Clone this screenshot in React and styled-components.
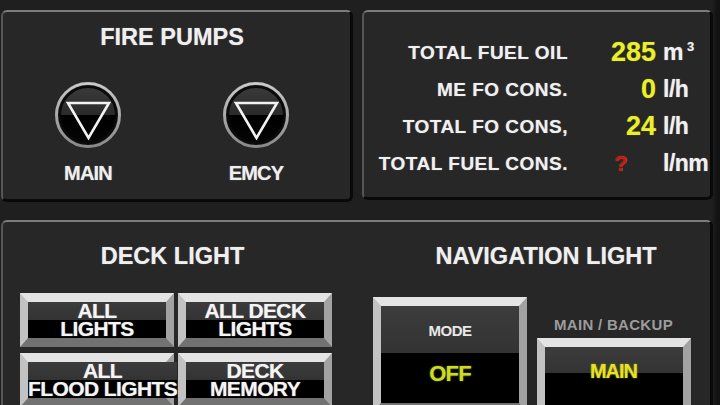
import styled, { createGlobalStyle } from "styled-components";

const GlobalStyle = createGlobalStyle`
  html, body {
    margin: 0;
    padding: 0;
    background: #1e1e1e;
  }
  body {
    width: 720px;
    height: 405px;
    overflow: hidden;
    font-family: "Liberation Sans", Arial, sans-serif;
  }
`;

const fuelRows = [
  { label: "TOTAL FUEL OIL", value: "285", unit: "m", sup: "3" },
  { label: "ME FO CONS.", value: "0", unit: "l/h" },
  { label: "TOTAL FO CONS,", value: "24", unit: "l/h" },
  { label: "TOTAL FUEL CONS.", value: "?", unit: "l/nm", unknown: true },
];

const deckButtons = [
  ["ALL", "LIGHTS"],
  ["ALL DECK", "LIGHTS"],
  ["ALL", "FLOOD LIGHTS"],
  ["DECK", "MEMORY"],
];

const PumpIcon = () => (
  <svg width="66" height="66" viewBox="0 0 66 66">
    <defs>
      <linearGradient id="ring" x1="0" y1="0" x2="0" y2="1">
        <stop offset="0" stopColor="#c8c8c8" />
        <stop offset="1" stopColor="#8a8a8a" />
      </linearGradient>
      <linearGradient id="face" x1="0" y1="0" x2="0" y2="1">
        <stop offset="0" stopColor="#3a3a3a" />
        <stop offset="0.5" stopColor="#2a2a2a" />
        <stop offset="0.5" stopColor="#000" />
        <stop offset="1" stopColor="#050505" />
      </linearGradient>
    </defs>
    <circle cx="33" cy="33" r="31.5" fill="#101010" stroke="url(#ring)" strokeWidth="3" />
    <circle cx="33" cy="33" r="28" fill="url(#face)" stroke="#0a0a0a" strokeWidth="2" />
    <path
      d="M13 21 L54 21 L33.5 56 Z"
      fill="none"
      stroke="#f2f2f2"
      strokeWidth="2.6"
      strokeLinejoin="miter"
    />
  </svg>
);

const App = () => {
  return (
    <Screen>
      <GlobalStyle />
      <TopRow>
        <PumpsPanel>
          <PanelTitle $shift={-9}>FIRE PUMPS</PanelTitle>
          <Pumps>
            {["MAIN", "EMCY"].map((name) => (
              <Pump key={name}>
                <PumpIcon />
                <PumpLabel>{name}</PumpLabel>
              </Pump>
            ))}
          </Pumps>
        </PumpsPanel>

        <FuelPanel>
          {fuelRows.map((row) => (
            <FuelRow key={row.label}>
              <FuelLabel>{row.label}</FuelLabel>
              <FuelValue $unknown={row.unknown}>{row.value}</FuelValue>
              <FuelUnit>
                {row.unit}
                {row.sup && <sup>{row.sup}</sup>}
              </FuelUnit>
            </FuelRow>
          ))}
        </FuelPanel>
      </TopRow>

      <LightsPanel>
        <DeckSection>
          <PanelTitle>DECK LIGHT</PanelTitle>
          <DeckGrid>
            {deckButtons.map(([a, b]) => (
              <BevelButton key={a + b} $h={54}>
                <Face $split={18}>
                  <DeckText>
                    <span>{a}</span>
                    <span>{b}</span>
                  </DeckText>
                </Face>
              </BevelButton>
            ))}
          </DeckGrid>
        </DeckSection>

        <NavSection>
          <PanelTitle $shift={40}>NAVIGATION LIGHT</PanelTitle>
          <NavRow>
            <BevelButton $h={115}>
              <Face $split={47}>
                <ModeLabel>MODE</ModeLabel>
                <ModeValue>OFF</ModeValue>
              </Face>
            </BevelButton>
            <BackupColumn>
              <BackupLabel>MAIN / BACKUP</BackupLabel>
              <BevelButton $h={80}>
                <Face $split={26}>
                  <BackupValue>MAIN</BackupValue>
                </Face>
              </BevelButton>
            </BackupColumn>
          </NavRow>
        </NavSection>
      </LightsPanel>
    </Screen>
  );
};

const Screen = styled.div`
  width: 720px;
  height: 405px;
  box-sizing: border-box;
  padding: 10px 0 0 1px;
  display: flex;
  flex-direction: column;
  gap: 18px;
  overflow: hidden;
  background: linear-gradient(90deg, #1f1f1f 712px, #131313 717px);
`;

const TopRow = styled.div`
  display: flex;
  align-items: flex-start;
  gap: 9px;
`;

const Panel = styled.div`
  box-sizing: border-box;
  flex-shrink: 0;
  background: #272727;
  border-radius: 6px;
  border-style: solid;
  border-width: 2px 3px 3px 2px;
  border-color: #7c7c7c #090909 #090909 #565656;
`;

const PumpsPanel = styled(Panel)`
  width: 352px;
  height: 192px;
  padding-top: 11px;
`;

const PanelTitle = styled.div`
  color: #efefef;
  font-size: 23.5px;
  font-weight: 700;
  line-height: 28px;
  text-align: center;
  white-space: nowrap;
  text-shadow: 0 0 1px rgba(255, 255, 255, 0.5);
  padding-left: ${(p) => (p.$shift > 0 ? p.$shift : 0)}px;
  padding-right: ${(p) => (p.$shift < 0 ? -p.$shift : 0)}px;
`;

const Pumps = styled.div`
  display: flex;
  gap: 68px;
  padding-left: 35px;
  margin-top: 31px;
`;

const Pump = styled.div`
  width: 100px;
  display: flex;
  flex-direction: column;
  align-items: center;
`;

const PumpLabel = styled.div`
  margin-top: 15px;
  color: #efefef;
  font-size: 20px;
  font-weight: 700;
  line-height: 20px;
  letter-spacing: -0.8px;
  text-shadow: 0 0 1px rgba(255, 255, 255, 0.5);
`;

const FuelPanel = styled(Panel)`
  width: 351px;
  height: 190px;
  padding-top: 22px;
  display: grid;
  grid-auto-rows: 37px;
  align-content: start;
`;

const FuelRow = styled.div`
  display: grid;
  grid-template-columns: 204px 81px 1fr;
  column-gap: 7px;
  align-items: center;
`;

const FuelLabel = styled.div`
  text-align: right;
  color: #f0f0f0;
  font-size: 19px;
  font-weight: 700;
  letter-spacing: 0.5px;
  white-space: nowrap;
  text-shadow: 0 0 1px rgba(255, 255, 255, 0.5);
`;

const FuelValue = styled.div`
  text-align: right;
  font-weight: 700;
  font-size: ${(p) => (p.$unknown ? "22px" : "27px")};
  color: ${(p) => (p.$unknown ? "#d41414" : "#eaef2c")};
  padding-right: ${(p) => (p.$unknown ? "28px" : "0")};
  text-shadow: 0 0 1px rgba(230, 240, 40, 0.5);
`;

const FuelUnit = styled.div`
  color: #f0f0f0;
  font-size: 23px;
  font-weight: 700;
  letter-spacing: -0.5px;
  white-space: nowrap;
  text-shadow: 0 0 1px rgba(255, 255, 255, 0.5);

  sup {
    font-size: 13px;
    margin-left: 4px;
    vertical-align: 9px;
    line-height: 0;
  }
`;

const LightsPanel = styled(Panel)`
  width: 712px;
  height: 220px;
  padding-top: 20px;
  display: flex;
`;

const DeckSection = styled.div`
  width: 339px;
  flex-shrink: 0;
`;

const DeckGrid = styled.div`
  display: grid;
  grid-template-columns: 154px 154px;
  column-gap: 4px;
  row-gap: 6px;
  margin: 23px 0 0 17px;
`;

const BevelButton = styled.div`
  box-sizing: border-box;
  height: ${(p) => p.$h}px;
  width: 154px;
  flex-shrink: 0;
  border-style: solid;
  border-width: 9px 8px 9px 8px;
  border-color: #e4e4e4 #a2a2a2 #727272 #c2c2c2;
  display: flex;
`;

const Face = styled.div`
  flex: 1;
  display: flex;
  flex-direction: column;
  align-items: center;
  background: linear-gradient(
    180deg,
    #3c3c3c 0,
    #333 ${(p) => p.$split}px,
    #000 ${(p) => p.$split}px
  );
`;

const DeckText = styled.div`
  display: flex;
  flex-direction: column;
  align-items: center;
  color: #f4f4f4;
  font-size: 21px;
  font-weight: 700;
  line-height: 18px;
  letter-spacing: -0.6px;
  white-space: nowrap;
  text-shadow: 0 0 1px rgba(255, 255, 255, 0.6);
`;

const NavSection = styled.div`
  flex: 1;
`;

const NavRow = styled.div`
  display: flex;
  gap: 9px;
  margin: 27px 0 0 31px;
`;

const ModeLabel = styled.div`
  margin-top: 16px;
  color: #e8e8e8;
  font-size: 15px;
  font-weight: 700;
  letter-spacing: -0.5px;
  line-height: 18px;
`;

const ModeValue = styled.div`
  margin-top: 22px;
  color: #cbdc22;
  font-size: 22px;
  font-weight: 700;
  letter-spacing: -0.8px;
  line-height: 24px;
  text-shadow: 0 0 2px rgba(200, 220, 30, 0.6);
`;

const BackupColumn = styled.div`
  display: flex;
  flex-direction: column;
  align-items: center;
  width: 155px;
`;

const BackupLabel = styled.div`
  margin: 19px 0 4px;
  color: #9c9c9c;
  font-size: 15px;
  font-weight: 700;
  line-height: 18px;
  letter-spacing: 0.3px;
  white-space: nowrap;
`;

const BackupValue = styled.div`
  margin-top: 13px;
  color: #e6e222;
  font-size: 20px;
  font-weight: 700;
  letter-spacing: -1px;
  line-height: 22px;
  text-shadow: 0 0 2px rgba(230, 225, 30, 0.6);
`;

export default App;
